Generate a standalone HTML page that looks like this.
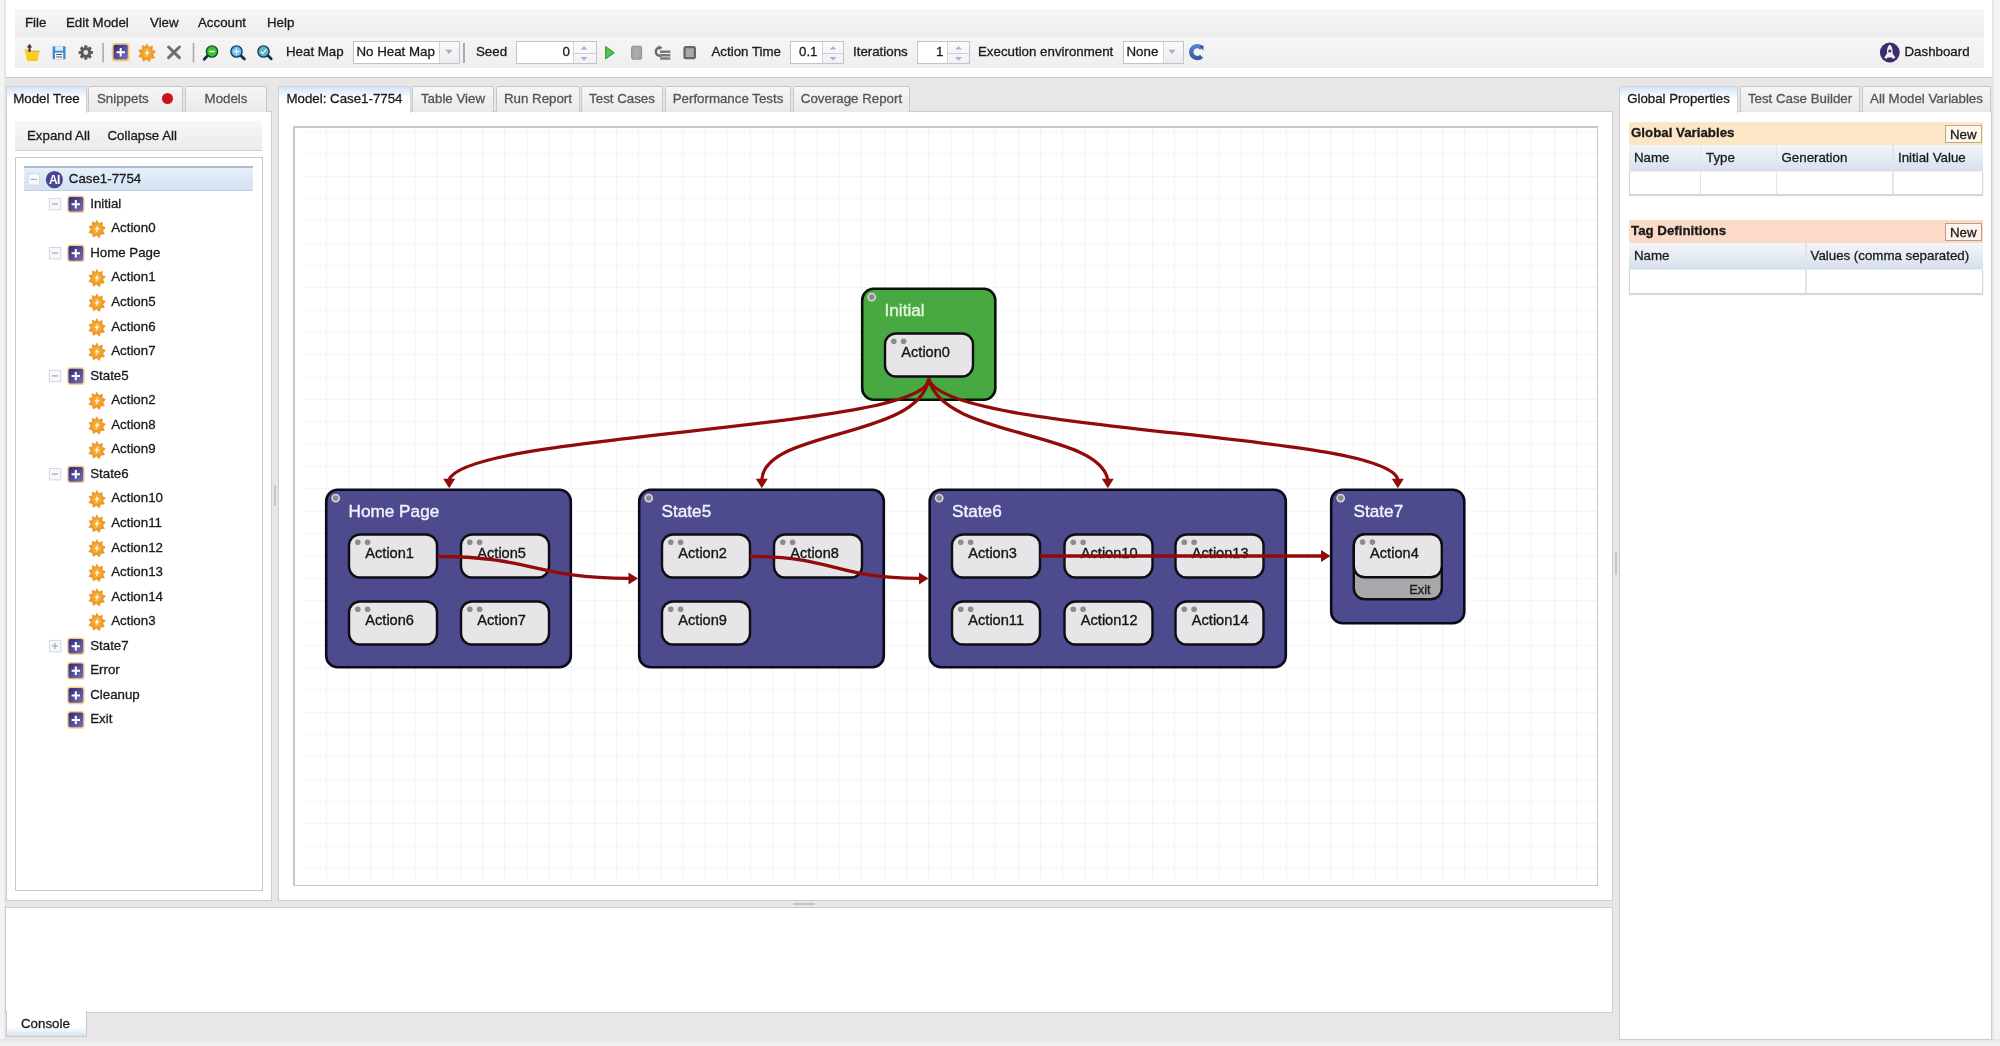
<!DOCTYPE html>
<html><head><meta charset="utf-8">
<style>
*{box-sizing:border-box}
html,body{margin:0;padding:0}
body{width:2000px;height:1046px;overflow:hidden;background:#e8e6e7;font-family:"Liberation Sans",sans-serif;font-size:13.3px;color:#1a1a1a;position:relative;-webkit-text-stroke:0.3px currentColor}
.a{position:absolute}
.t{position:absolute;white-space:nowrap;line-height:1}
.panel{position:absolute;background:#fff;border:1px solid #cdccd0}
.tab{position:absolute;top:86px;height:26px;border:1px solid #c6c6ca;border-bottom:none;background:linear-gradient(#f6f6f8,#e9e9ec);color:#555;text-align:center;line-height:23.2px;border-radius:2px 2px 0 0}
.tab.on{background:linear-gradient(#d6e4f5,#ffffff 45%);color:#1a1a1a;height:27px;border-color:#c9d3df}
.tb{position:absolute;height:24px;top:41px;border:1px solid #c3c3c8;background:#fff}
.tb .sp{position:absolute;top:0;bottom:0;border-left:1px solid #d3d3d8;background:linear-gradient(#fafafa,#ececef)}
.sep{position:absolute;top:44px;width:2px;height:18px;background:#b9b9bd}
</style></head>
<body>
<div id="wrap" style="position:absolute;left:0;top:0;width:2000px;height:1046px;will-change:transform">
<!-- left outer strip -->
<div class="a" style="left:0;top:0;width:6px;height:1046px;background:linear-gradient(90deg,#f3f3f5 60%,#dcdcdf)"></div>
<div class="a" style="left:1992px;top:0;width:8px;height:1046px;background:linear-gradient(90deg,#e2e2e5,#f3f3f5 40%)"></div>
<!-- top panel -->
<div class="a" style="left:6px;top:0;width:1986px;height:78px;background:#fff;border-bottom:1.5px solid #c8c8cc"></div>
<div class="a" style="left:15px;top:9px;width:1969px;height:28px;background:linear-gradient(#f6f6f6,#ececec)"></div>
<div class="a" style="left:15px;top:37px;width:1969px;height:31px;background:linear-gradient(#f5f5f5,#efefef)"></div>
<div class="t" style="left:25px;top:15.6px">File</div>
<div class="t" style="left:66px;top:15.6px">Edit Model</div>
<div class="t" style="left:150px;top:15.6px">View</div>
<div class="t" style="left:198px;top:15.6px">Account</div>
<div class="t" style="left:267px;top:15.6px">Help</div>

<!-- TOOLBAR -->
<svg class="a" style="left:0;top:36px" width="300" height="32">
<defs>
<linearGradient id="pg2" x1="0" y1="0" x2="1" y2="1"><stop offset="0" stop-color="#2f2a78"/><stop offset="1" stop-color="#7a72ba"/></linearGradient>
<linearGradient id="fold" x1="0" y1="0" x2="0" y2="1"><stop offset="0" stop-color="#f3d24a"/><stop offset="1" stop-color="#ffc800"/></linearGradient>
</defs>
<!-- folder -->
<path d="M24.8,14.5 L39.8,14.5 L37.5,25 L27,25 Z" fill="url(#fold)"/>
<path d="M24.5,14 L31,14 L32,15.5 L39.5,15.5" fill="none" stroke="#e0b830" stroke-width="1"/>
<path d="M29.5,16 V9.8" stroke="#5a2a48" stroke-width="2"/>
<path d="M26.8,11.5 L29.5,7.8 L32.2,11.5 Z" fill="#5a2a48"/>
<!-- save -->
<rect x="52.6" y="10.2" width="13" height="13" rx="1" fill="#3f8fd0"/>
<rect x="55.2" y="10.2" width="7.8" height="4.5" fill="#d8ecfa"/>
<rect x="55" y="16.6" width="8.2" height="6.6" fill="#f4f6f8"/>
<path d="M56.2,18.5 H62 M56.2,21 H62" stroke="#555" stroke-width="1.1"/>
<!-- gear -->
<g transform="translate(85.8,16.5)">
<circle r="5.3" fill="#5b5b5b"/>
<g fill="#5b5b5b"><rect x="-1.6" y="-7.2" width="3.2" height="14.4" rx="0.8"/><rect x="-1.6" y="-7.2" width="3.2" height="14.4" rx="0.8" transform="rotate(45)"/><rect x="-1.6" y="-7.2" width="3.2" height="14.4" rx="0.8" transform="rotate(90)"/><rect x="-1.6" y="-7.2" width="3.2" height="14.4" rx="0.8" transform="rotate(135)"/></g>
<circle r="2.4" fill="#e8e8e8"/>
</g>
<rect x="102.3" y="7" width="1.6" height="19.5" fill="#ababab"/>
<!-- plus box -->
<rect x="111.8" y="7" width="17.8" height="18.5" rx="3" fill="#f6c878"/>
<rect x="113.6" y="8.8" width="14.2" height="14.8" rx="2" fill="url(#pg2)"/>
<path d="M120.7,12 V20.5 M116.5,16.2 H125" stroke="#fff" stroke-width="2"/>
<!-- burst -->
<g transform="translate(146.8,16.8) scale(1.02)">
<path d="M0,-8.6 L1.9,-5.3 L5.6,-6.6 L5.1,-2.8 L8.6,-1.3 L6,1.6 L7.6,5 L3.8,5.2 L2.6,8.8 L-0.3,6.3 L-3.6,8.2 L-4.2,4.6 L-8,3.6 L-5.8,0.6 L-7.8,-2.6 L-4.2,-3.2 L-4.6,-7.2 L-1.4,-5.6 Z" fill="#f29a22" stroke="#e08a18" stroke-width="0.6"/><circle r="4.8" fill="#f4a838"/><path d="M1.6,-4.4 L-2.4,0.8 L-0.2,0.8 L-1.4,4.6 L2.8,-0.8 L0.4,-0.8 Z" fill="#fff6e0"/>
</g>
<!-- X -->
<path d="M168.6,11 L179.4,21.6 M179.4,11 L168.6,21.6" stroke="#6e6e6e" stroke-width="3" stroke-linecap="round"/>
<rect x="192.7" y="7" width="1.6" height="19.5" fill="#ababab"/>
<!-- zoom out green -->
<path d="M207.5,19.8 L204.2,23.2" stroke="#0e3050" stroke-width="2.8" stroke-linecap="round"/>
<circle cx="212" cy="15.5" r="5.6" fill="#3cc22c" stroke="#0e4a3a" stroke-width="1.4"/>
<path d="M209.2,15.5 H214.8" stroke="#e8ffe0" stroke-width="1.5"/>
<!-- zoom in blue -->
<path d="M241,19.8 L244.4,23" stroke="#0e3050" stroke-width="2.8" stroke-linecap="round"/>
<circle cx="236.5" cy="15.5" r="5.6" fill="#6cbcea" stroke="#103c60" stroke-width="1.4"/>
<path d="M236.5,12.6 V18.4 M233.7,15.5 H239.3" stroke="#e8f6ff" stroke-width="1.3"/>
<!-- zoom fit teal -->
<path d="M268,19.8 L271.2,22.8" stroke="#0e3050" stroke-width="2.8" stroke-linecap="round"/>
<circle cx="263.5" cy="15.5" r="5.6" fill="#5fb2c2" stroke="#0f3c52" stroke-width="1.4"/>
<path d="M260.8,15.6 L262.8,17.6 L266.3,13.4" fill="none" stroke="#dff8ff" stroke-width="1.3"/>
</svg>
<div class="t" style="left:286px;top:45.1px">Heat Map</div>
<div class="tb" style="left:353px;width:107px;height:22.5px;top:41.3px"><div class="sp" style="left:84.5px;width:20.5px"></div></div>
<div class="t" style="left:356.5px;top:45.1px">No Heat Map</div>
<svg class="a" style="left:445px;top:49px" width="9" height="6"><path d="M0.5,0.8 H7.5 L4,5 Z" fill="#a3aacb"/></svg>
<div class="a" style="left:463px;top:43px;width:1.6px;height:19.5px;background:#ababab"></div>
<div class="t" style="left:476px;top:45.1px">Seed</div>
<div class="tb" style="left:515.5px;width:81px;height:22.5px;top:41.3px"><div class="sp" style="left:56.5px;width:22.5px;background:linear-gradient(#fbfbfd,#f1f1f5)"></div><div class="a" style="left:57px;width:22px;top:10.5px;height:1px;background:#cfcfd4"></div></div>
<div class="t" style="left:562.5px;top:45.1px">0</div>
<div class="t" style="left:711.5px;top:45.1px">Action Time</div>
<div class="tb" style="left:790px;width:54px;height:22.5px;top:41.3px"><div class="sp" style="left:30.5px;width:21.5px;background:linear-gradient(#fbfbfd,#f1f1f5)"></div><div class="a" style="left:31px;width:21px;top:10.5px;height:1px;background:#cfcfd4"></div></div>
<div class="t" style="left:799px;top:45.1px">0.1</div>
<div class="t" style="left:853px;top:45.1px">Iterations</div>
<div class="tb" style="left:917px;width:53px;height:22.5px;top:41.3px"><div class="sp" style="left:28.5px;width:22.5px;background:linear-gradient(#fbfbfd,#f1f1f5)"></div><div class="a" style="left:29px;width:22px;top:10.5px;height:1px;background:#cfcfd4"></div></div>
<div class="t" style="left:936px;top:45.1px">1</div>
<svg class="a" style="left:500px;top:36px" width="500" height="32">
<g fill="#a9aed8"><path d="M80.5,13.6 L84,10.2 L87.5,13.6 Z"/><path d="M80.5,21 L84,24.4 L87.5,21 Z"/>
<path d="M329.5,13.6 L333,10.2 L336.5,13.6 Z"/><path d="M329.5,21 L333,24.4 L336.5,21 Z"/>
<path d="M455,13.6 L458.5,10.2 L462,13.6 Z"/><path d="M455,21 L458.5,24.4 L462,21 Z"/></g>
<!-- play -->
<path d="M105.6,10.8 L114,16.8 L105.6,22.8 Z" fill="#56c452" stroke="#3a9e3a" stroke-width="1.1" stroke-linejoin="round"/>
<!-- pause -->
<rect x="131.6" y="10.2" width="10" height="13" rx="1.5" fill="#a6a6a6" stroke="#8f8f8f" stroke-width="1"/>
<path d="M136.6,10.5 V23" stroke="#b8b8b8" stroke-width="0.8"/>
<!-- step -->
<path d="M160.5,11.4 A4.2,4.2 0 1 0 161.5,19.5" fill="none" stroke="#6a6a6a" stroke-width="2.4"/>
<path d="M158.5,9.2 L162.5,11.8 L158.8,14 Z" fill="#6a6a6a"/>
<rect x="160" y="14.5" width="10.4" height="2.5" fill="#7a7a7a"/><rect x="160" y="18" width="10.4" height="2.5" fill="#7a7a7a"/><rect x="160" y="21.3" width="10.4" height="2.4" fill="#7a7a7a"/>
<!-- stop -->
<rect x="184.5" y="11.2" width="10.4" height="11" rx="1.5" fill="#a9a9a9" stroke="#666" stroke-width="2.2"/>
</svg>
<div class="t" style="left:978px;top:45.1px">Execution environment</div>
<div class="tb" style="left:1123px;width:61px;height:22.5px;top:41.3px"><div class="sp" style="left:38.5px;width:20.5px"></div></div>
<div class="t" style="left:1126.5px;top:45.1px">None</div>
<svg class="a" style="left:1168px;top:49px" width="9" height="6"><path d="M0.5,0.8 H7.5 L4,5 Z" fill="#a3aacb"/></svg>
<svg class="a" style="left:1186px;top:42px" width="22" height="22">
<defs><linearGradient id="rf" x1="0" y1="0" x2="0" y2="1"><stop offset="0" stop-color="#4f86cc"/><stop offset="1" stop-color="#3a5aa8"/></linearGradient></defs>
<path d="M15.8,6.2 A6,6 0 1 0 15.6,14.2" fill="none" stroke="url(#rf)" stroke-width="4.4"/>
<path d="M13,3.2 L17.6,3.8 L17.4,8.8 Z" fill="#3a5a9a"/>
</svg>
<svg class="a" style="left:1878px;top:41px" width="24" height="24">
<circle cx="11.8" cy="11.5" r="9.9" fill="#3b2a6c"/>
<path d="M11.8,3.6 C14.2,5.4 14.8,8.5 14.6,12.6 L17.4,16.4 L15.2,18 L14,16.4 H9.6 L8.4,18 L6.2,16.4 L9,12.6 C8.8,8.5 9.4,5.4 11.8,3.6 Z" fill="#f4eefa"/>
<circle cx="11.8" cy="10" r="1.6" fill="#3b2a6c"/>
</svg>
<div class="t" style="left:1904.5px;top:45.1px">Dashboard</div>


<!-- LEFT PANEL -->
<div class="panel" style="left:6px;top:111px;width:266px;height:790px"></div>
<div class="tab on" style="left:6px;width:81px">Model Tree</div>
<div class="tab" style="left:88px;width:95px;text-align:left;padding-left:8px">Snippets</div>
<div class="a" style="left:161.5px;top:92.6px;width:11.6px;height:11.6px;border-radius:50%;background:#cc1317"></div>
<div class="tab" style="left:185px;width:82px">Models</div>
<div class="a" style="left:15px;top:121px;width:247px;height:30px;background:linear-gradient(#f7f7f7,#ebebeb);border-bottom:1px solid #cfcfd2"></div>
<div class="t" style="left:27px;top:129.4px">Expand All</div>
<div class="t" style="left:107.5px;top:129.4px">Collapse All</div>
<div class="a" style="left:15px;top:157px;width:248px;height:734px;background:#fff;border:1px solid #c9c9cd"></div>
<div class="a" style="left:24px;top:166px;width:229px;height:25px;background:linear-gradient(#e6effa,#d3e1f3);border-top:2px solid #aebdcc;border-bottom:1px solid #c2d0de"></div>
<svg class="a" style="left:0;top:0" width="280" height="760">
<defs><linearGradient id="pg" x1="0" y1="0" x2="1" y2="1"><stop offset="0" stop-color="#2f2a78"/><stop offset="1" stop-color="#7770b8"/></linearGradient>


</defs>
<circle cx="54.4" cy="179.6" r="8.6" fill="#4a4590"/>
<text x="54.4" y="183.9" text-anchor="middle" font-family="Liberation Sans" font-weight="bold" font-size="12" fill="#fff" letter-spacing="-0.6">AI</text>
<rect x="28.2" y="173.8" width="11.4" height="11.4" fill="#f6f8fb" stroke="#d2d8e0" stroke-width="1"/>
<path d="M30.8,179.4 H36.8" stroke="#a4aab2" stroke-width="1.2"/>
<g transform="translate(75.8,204.2)"><rect x="-8.6" y="-8.8" width="17.4" height="17.6" rx="3.2" fill="#f8d08a"/><rect x="-7.3" y="-7.3" width="14.7" height="14.7" rx="2" fill="url(#pg)"/><path d="M0,-4.2 V4.2 M-4.2,0 H4.2" stroke="#fff" stroke-width="2"/></g>
<rect x="49.4" y="198.4" width="11.4" height="11.4" fill="#f6f8fb" stroke="#d2d8e0" stroke-width="1"/>
<path d="M52.0,204.0 H58.0" stroke="#a4aab2" stroke-width="1.2"/>
<g transform="translate(96.8,228.9)"><path d="M0,-8.6 L1.9,-5.3 L5.6,-6.6 L5.1,-2.8 L8.6,-1.3 L6,1.6 L7.6,5 L3.8,5.2 L2.6,8.8 L-0.3,6.3 L-3.6,8.2 L-4.2,4.6 L-8,3.6 L-5.8,0.6 L-7.8,-2.6 L-4.2,-3.2 L-4.6,-7.2 L-1.4,-5.6 Z" fill="#f29a22" stroke="#e08a18" stroke-width="0.6"/><circle r="4.8" fill="#f4a838"/><path d="M1.6,-4.4 L-2.4,0.8 L-0.2,0.8 L-1.4,4.6 L2.8,-0.8 L0.4,-0.8 Z" fill="#fff6e0"/></g>
<g transform="translate(75.8,253.3)"><rect x="-8.6" y="-8.8" width="17.4" height="17.6" rx="3.2" fill="#f8d08a"/><rect x="-7.3" y="-7.3" width="14.7" height="14.7" rx="2" fill="url(#pg)"/><path d="M0,-4.2 V4.2 M-4.2,0 H4.2" stroke="#fff" stroke-width="2"/></g>
<rect x="49.4" y="247.5" width="11.4" height="11.4" fill="#f6f8fb" stroke="#d2d8e0" stroke-width="1"/>
<path d="M52.0,253.1 H58.0" stroke="#a4aab2" stroke-width="1.2"/>
<g transform="translate(96.8,278.0)"><path d="M0,-8.6 L1.9,-5.3 L5.6,-6.6 L5.1,-2.8 L8.6,-1.3 L6,1.6 L7.6,5 L3.8,5.2 L2.6,8.8 L-0.3,6.3 L-3.6,8.2 L-4.2,4.6 L-8,3.6 L-5.8,0.6 L-7.8,-2.6 L-4.2,-3.2 L-4.6,-7.2 L-1.4,-5.6 Z" fill="#f29a22" stroke="#e08a18" stroke-width="0.6"/><circle r="4.8" fill="#f4a838"/><path d="M1.6,-4.4 L-2.4,0.8 L-0.2,0.8 L-1.4,4.6 L2.8,-0.8 L0.4,-0.8 Z" fill="#fff6e0"/></g>
<g transform="translate(96.8,302.6)"><path d="M0,-8.6 L1.9,-5.3 L5.6,-6.6 L5.1,-2.8 L8.6,-1.3 L6,1.6 L7.6,5 L3.8,5.2 L2.6,8.8 L-0.3,6.3 L-3.6,8.2 L-4.2,4.6 L-8,3.6 L-5.8,0.6 L-7.8,-2.6 L-4.2,-3.2 L-4.6,-7.2 L-1.4,-5.6 Z" fill="#f29a22" stroke="#e08a18" stroke-width="0.6"/><circle r="4.8" fill="#f4a838"/><path d="M1.6,-4.4 L-2.4,0.8 L-0.2,0.8 L-1.4,4.6 L2.8,-0.8 L0.4,-0.8 Z" fill="#fff6e0"/></g>
<g transform="translate(96.8,327.2)"><path d="M0,-8.6 L1.9,-5.3 L5.6,-6.6 L5.1,-2.8 L8.6,-1.3 L6,1.6 L7.6,5 L3.8,5.2 L2.6,8.8 L-0.3,6.3 L-3.6,8.2 L-4.2,4.6 L-8,3.6 L-5.8,0.6 L-7.8,-2.6 L-4.2,-3.2 L-4.6,-7.2 L-1.4,-5.6 Z" fill="#f29a22" stroke="#e08a18" stroke-width="0.6"/><circle r="4.8" fill="#f4a838"/><path d="M1.6,-4.4 L-2.4,0.8 L-0.2,0.8 L-1.4,4.6 L2.8,-0.8 L0.4,-0.8 Z" fill="#fff6e0"/></g>
<g transform="translate(96.8,351.7)"><path d="M0,-8.6 L1.9,-5.3 L5.6,-6.6 L5.1,-2.8 L8.6,-1.3 L6,1.6 L7.6,5 L3.8,5.2 L2.6,8.8 L-0.3,6.3 L-3.6,8.2 L-4.2,4.6 L-8,3.6 L-5.8,0.6 L-7.8,-2.6 L-4.2,-3.2 L-4.6,-7.2 L-1.4,-5.6 Z" fill="#f29a22" stroke="#e08a18" stroke-width="0.6"/><circle r="4.8" fill="#f4a838"/><path d="M1.6,-4.4 L-2.4,0.8 L-0.2,0.8 L-1.4,4.6 L2.8,-0.8 L0.4,-0.8 Z" fill="#fff6e0"/></g>
<g transform="translate(75.8,376.1)"><rect x="-8.6" y="-8.8" width="17.4" height="17.6" rx="3.2" fill="#f8d08a"/><rect x="-7.3" y="-7.3" width="14.7" height="14.7" rx="2" fill="url(#pg)"/><path d="M0,-4.2 V4.2 M-4.2,0 H4.2" stroke="#fff" stroke-width="2"/></g>
<rect x="49.4" y="370.3" width="11.4" height="11.4" fill="#f6f8fb" stroke="#d2d8e0" stroke-width="1"/>
<path d="M52.0,375.9 H58.0" stroke="#a4aab2" stroke-width="1.2"/>
<g transform="translate(96.8,400.8)"><path d="M0,-8.6 L1.9,-5.3 L5.6,-6.6 L5.1,-2.8 L8.6,-1.3 L6,1.6 L7.6,5 L3.8,5.2 L2.6,8.8 L-0.3,6.3 L-3.6,8.2 L-4.2,4.6 L-8,3.6 L-5.8,0.6 L-7.8,-2.6 L-4.2,-3.2 L-4.6,-7.2 L-1.4,-5.6 Z" fill="#f29a22" stroke="#e08a18" stroke-width="0.6"/><circle r="4.8" fill="#f4a838"/><path d="M1.6,-4.4 L-2.4,0.8 L-0.2,0.8 L-1.4,4.6 L2.8,-0.8 L0.4,-0.8 Z" fill="#fff6e0"/></g>
<g transform="translate(96.8,425.4)"><path d="M0,-8.6 L1.9,-5.3 L5.6,-6.6 L5.1,-2.8 L8.6,-1.3 L6,1.6 L7.6,5 L3.8,5.2 L2.6,8.8 L-0.3,6.3 L-3.6,8.2 L-4.2,4.6 L-8,3.6 L-5.8,0.6 L-7.8,-2.6 L-4.2,-3.2 L-4.6,-7.2 L-1.4,-5.6 Z" fill="#f29a22" stroke="#e08a18" stroke-width="0.6"/><circle r="4.8" fill="#f4a838"/><path d="M1.6,-4.4 L-2.4,0.8 L-0.2,0.8 L-1.4,4.6 L2.8,-0.8 L0.4,-0.8 Z" fill="#fff6e0"/></g>
<g transform="translate(96.8,450.0)"><path d="M0,-8.6 L1.9,-5.3 L5.6,-6.6 L5.1,-2.8 L8.6,-1.3 L6,1.6 L7.6,5 L3.8,5.2 L2.6,8.8 L-0.3,6.3 L-3.6,8.2 L-4.2,4.6 L-8,3.6 L-5.8,0.6 L-7.8,-2.6 L-4.2,-3.2 L-4.6,-7.2 L-1.4,-5.6 Z" fill="#f29a22" stroke="#e08a18" stroke-width="0.6"/><circle r="4.8" fill="#f4a838"/><path d="M1.6,-4.4 L-2.4,0.8 L-0.2,0.8 L-1.4,4.6 L2.8,-0.8 L0.4,-0.8 Z" fill="#fff6e0"/></g>
<g transform="translate(75.8,474.3)"><rect x="-8.6" y="-8.8" width="17.4" height="17.6" rx="3.2" fill="#f8d08a"/><rect x="-7.3" y="-7.3" width="14.7" height="14.7" rx="2" fill="url(#pg)"/><path d="M0,-4.2 V4.2 M-4.2,0 H4.2" stroke="#fff" stroke-width="2"/></g>
<rect x="49.4" y="468.5" width="11.4" height="11.4" fill="#f6f8fb" stroke="#d2d8e0" stroke-width="1"/>
<path d="M52.0,474.1 H58.0" stroke="#a4aab2" stroke-width="1.2"/>
<g transform="translate(96.8,499.1)"><path d="M0,-8.6 L1.9,-5.3 L5.6,-6.6 L5.1,-2.8 L8.6,-1.3 L6,1.6 L7.6,5 L3.8,5.2 L2.6,8.8 L-0.3,6.3 L-3.6,8.2 L-4.2,4.6 L-8,3.6 L-5.8,0.6 L-7.8,-2.6 L-4.2,-3.2 L-4.6,-7.2 L-1.4,-5.6 Z" fill="#f29a22" stroke="#e08a18" stroke-width="0.6"/><circle r="4.8" fill="#f4a838"/><path d="M1.6,-4.4 L-2.4,0.8 L-0.2,0.8 L-1.4,4.6 L2.8,-0.8 L0.4,-0.8 Z" fill="#fff6e0"/></g>
<g transform="translate(96.8,523.6)"><path d="M0,-8.6 L1.9,-5.3 L5.6,-6.6 L5.1,-2.8 L8.6,-1.3 L6,1.6 L7.6,5 L3.8,5.2 L2.6,8.8 L-0.3,6.3 L-3.6,8.2 L-4.2,4.6 L-8,3.6 L-5.8,0.6 L-7.8,-2.6 L-4.2,-3.2 L-4.6,-7.2 L-1.4,-5.6 Z" fill="#f29a22" stroke="#e08a18" stroke-width="0.6"/><circle r="4.8" fill="#f4a838"/><path d="M1.6,-4.4 L-2.4,0.8 L-0.2,0.8 L-1.4,4.6 L2.8,-0.8 L0.4,-0.8 Z" fill="#fff6e0"/></g>
<g transform="translate(96.8,548.2)"><path d="M0,-8.6 L1.9,-5.3 L5.6,-6.6 L5.1,-2.8 L8.6,-1.3 L6,1.6 L7.6,5 L3.8,5.2 L2.6,8.8 L-0.3,6.3 L-3.6,8.2 L-4.2,4.6 L-8,3.6 L-5.8,0.6 L-7.8,-2.6 L-4.2,-3.2 L-4.6,-7.2 L-1.4,-5.6 Z" fill="#f29a22" stroke="#e08a18" stroke-width="0.6"/><circle r="4.8" fill="#f4a838"/><path d="M1.6,-4.4 L-2.4,0.8 L-0.2,0.8 L-1.4,4.6 L2.8,-0.8 L0.4,-0.8 Z" fill="#fff6e0"/></g>
<g transform="translate(96.8,572.8)"><path d="M0,-8.6 L1.9,-5.3 L5.6,-6.6 L5.1,-2.8 L8.6,-1.3 L6,1.6 L7.6,5 L3.8,5.2 L2.6,8.8 L-0.3,6.3 L-3.6,8.2 L-4.2,4.6 L-8,3.6 L-5.8,0.6 L-7.8,-2.6 L-4.2,-3.2 L-4.6,-7.2 L-1.4,-5.6 Z" fill="#f29a22" stroke="#e08a18" stroke-width="0.6"/><circle r="4.8" fill="#f4a838"/><path d="M1.6,-4.4 L-2.4,0.8 L-0.2,0.8 L-1.4,4.6 L2.8,-0.8 L0.4,-0.8 Z" fill="#fff6e0"/></g>
<g transform="translate(96.8,597.3)"><path d="M0,-8.6 L1.9,-5.3 L5.6,-6.6 L5.1,-2.8 L8.6,-1.3 L6,1.6 L7.6,5 L3.8,5.2 L2.6,8.8 L-0.3,6.3 L-3.6,8.2 L-4.2,4.6 L-8,3.6 L-5.8,0.6 L-7.8,-2.6 L-4.2,-3.2 L-4.6,-7.2 L-1.4,-5.6 Z" fill="#f29a22" stroke="#e08a18" stroke-width="0.6"/><circle r="4.8" fill="#f4a838"/><path d="M1.6,-4.4 L-2.4,0.8 L-0.2,0.8 L-1.4,4.6 L2.8,-0.8 L0.4,-0.8 Z" fill="#fff6e0"/></g>
<g transform="translate(96.8,621.9)"><path d="M0,-8.6 L1.9,-5.3 L5.6,-6.6 L5.1,-2.8 L8.6,-1.3 L6,1.6 L7.6,5 L3.8,5.2 L2.6,8.8 L-0.3,6.3 L-3.6,8.2 L-4.2,4.6 L-8,3.6 L-5.8,0.6 L-7.8,-2.6 L-4.2,-3.2 L-4.6,-7.2 L-1.4,-5.6 Z" fill="#f29a22" stroke="#e08a18" stroke-width="0.6"/><circle r="4.8" fill="#f4a838"/><path d="M1.6,-4.4 L-2.4,0.8 L-0.2,0.8 L-1.4,4.6 L2.8,-0.8 L0.4,-0.8 Z" fill="#fff6e0"/></g>
<g transform="translate(75.8,646.2)"><rect x="-8.6" y="-8.8" width="17.4" height="17.6" rx="3.2" fill="#f8d08a"/><rect x="-7.3" y="-7.3" width="14.7" height="14.7" rx="2" fill="url(#pg)"/><path d="M0,-4.2 V4.2 M-4.2,0 H4.2" stroke="#fff" stroke-width="2"/></g>
<rect x="49.4" y="640.4" width="11.4" height="11.4" fill="#f6f8fb" stroke="#d2d8e0" stroke-width="1"/>
<path d="M52.0,646.0 H58.0" stroke="#a4aab2" stroke-width="1.2"/>
<path d="M55.0,643.0 V649.0" stroke="#a4aab2" stroke-width="1.2"/>
<g transform="translate(75.8,670.8)"><rect x="-8.6" y="-8.8" width="17.4" height="17.6" rx="3.2" fill="#f8d08a"/><rect x="-7.3" y="-7.3" width="14.7" height="14.7" rx="2" fill="url(#pg)"/><path d="M0,-4.2 V4.2 M-4.2,0 H4.2" stroke="#fff" stroke-width="2"/></g>
<g transform="translate(75.8,695.4)"><rect x="-8.6" y="-8.8" width="17.4" height="17.6" rx="3.2" fill="#f8d08a"/><rect x="-7.3" y="-7.3" width="14.7" height="14.7" rx="2" fill="url(#pg)"/><path d="M0,-4.2 V4.2 M-4.2,0 H4.2" stroke="#fff" stroke-width="2"/></g>
<g transform="translate(75.8,719.9)"><rect x="-8.6" y="-8.8" width="17.4" height="17.6" rx="3.2" fill="#f8d08a"/><rect x="-7.3" y="-7.3" width="14.7" height="14.7" rx="2" fill="url(#pg)"/><path d="M0,-4.2 V4.2 M-4.2,0 H4.2" stroke="#fff" stroke-width="2"/></g>
</svg>
<div class="t" style="left:68.8px;top:172.1px">Case1-7754</div>
<div class="t" style="left:90.2px;top:196.7px">Initial</div>
<div class="t" style="left:111.2px;top:221.2px">Action0</div>
<div class="t" style="left:90.2px;top:245.8px">Home Page</div>
<div class="t" style="left:111.2px;top:270.3px">Action1</div>
<div class="t" style="left:111.2px;top:294.9px">Action5</div>
<div class="t" style="left:111.2px;top:319.5px">Action6</div>
<div class="t" style="left:111.2px;top:344.0px">Action7</div>
<div class="t" style="left:90.2px;top:368.6px">State5</div>
<div class="t" style="left:111.2px;top:393.1px">Action2</div>
<div class="t" style="left:111.2px;top:417.7px">Action8</div>
<div class="t" style="left:111.2px;top:442.3px">Action9</div>
<div class="t" style="left:90.2px;top:466.8px">State6</div>
<div class="t" style="left:111.2px;top:491.4px">Action10</div>
<div class="t" style="left:111.2px;top:515.9px">Action11</div>
<div class="t" style="left:111.2px;top:540.5px">Action12</div>
<div class="t" style="left:111.2px;top:565.1px">Action13</div>
<div class="t" style="left:111.2px;top:589.6px">Action14</div>
<div class="t" style="left:111.2px;top:614.2px">Action3</div>
<div class="t" style="left:90.2px;top:638.7px">State7</div>
<div class="t" style="left:90.2px;top:663.3px">Error</div>
<div class="t" style="left:90.2px;top:687.9px">Cleanup</div>
<div class="t" style="left:90.2px;top:712.4px">Exit</div>

<!-- CENTER PANEL -->
<div class="panel" style="left:278px;top:111px;width:1335px;height:790px"></div>
<div class="tab on" style="left:278px;width:133px">Model: Case1-7754</div>
<div class="tab" style="left:412px;width:82px">Table View</div>
<div class="tab" style="left:496px;width:84px">Run Report</div>
<div class="tab" style="left:581px;width:82px">Test Cases</div>
<div class="tab" style="left:665px;width:126px">Performance Tests</div>
<div class="tab" style="left:793px;width:117px">Coverage Report</div>
<div class="a" style="left:293px;top:126px;width:1305px;height:760px;border:2px solid #c8c8cc;border-right-width:1px;border-bottom-width:1px;background:#fff"></div>
<svg class="a" style="left:0;top:0" width="2000" height="1046" viewBox="0 0 2000 1046">
<defs><clipPath id="cv"><rect x="295" y="128" width="1302" height="757"/></clipPath></defs>
<g clip-path="url(#cv)" stroke-width="1" shape-rendering="crispEdges">
<line x1="326.0" y1="128" x2="326.0" y2="882" stroke="#f3f3f5"/>
<line x1="348.3" y1="128" x2="348.3" y2="882" stroke="#f3f3f5"/>
<line x1="370.7" y1="128" x2="370.7" y2="882" stroke="#f3f3f5"/>
<line x1="393.0" y1="128" x2="393.0" y2="882" stroke="#f3f3f5"/>
<line x1="415.3" y1="128" x2="415.3" y2="882" stroke="#f3f3f5"/>
<line x1="437.6" y1="128" x2="437.6" y2="882" stroke="#f3f3f5"/>
<line x1="460.0" y1="128" x2="460.0" y2="882" stroke="#f3f3f5"/>
<line x1="482.3" y1="128" x2="482.3" y2="882" stroke="#f3f3f5"/>
<line x1="504.6" y1="128" x2="504.6" y2="882" stroke="#f3f3f5"/>
<line x1="527.0" y1="128" x2="527.0" y2="882" stroke="#f3f3f5"/>
<line x1="549.3" y1="128" x2="549.3" y2="882" stroke="#f3f3f5"/>
<line x1="571.6" y1="128" x2="571.6" y2="882" stroke="#f3f3f5"/>
<line x1="594.0" y1="128" x2="594.0" y2="882" stroke="#f3f3f5"/>
<line x1="616.3" y1="128" x2="616.3" y2="882" stroke="#f3f3f5"/>
<line x1="638.6" y1="128" x2="638.6" y2="882" stroke="#f3f3f5"/>
<line x1="661.0" y1="128" x2="661.0" y2="882" stroke="#f3f3f5"/>
<line x1="683.3" y1="128" x2="683.3" y2="882" stroke="#f3f3f5"/>
<line x1="705.6" y1="128" x2="705.6" y2="882" stroke="#f3f3f5"/>
<line x1="727.9" y1="128" x2="727.9" y2="882" stroke="#f3f3f5"/>
<line x1="750.3" y1="128" x2="750.3" y2="882" stroke="#f3f3f5"/>
<line x1="772.6" y1="128" x2="772.6" y2="882" stroke="#f3f3f5"/>
<line x1="794.9" y1="128" x2="794.9" y2="882" stroke="#f3f3f5"/>
<line x1="817.3" y1="128" x2="817.3" y2="882" stroke="#f3f3f5"/>
<line x1="839.6" y1="128" x2="839.6" y2="882" stroke="#f3f3f5"/>
<line x1="861.9" y1="128" x2="861.9" y2="882" stroke="#f3f3f5"/>
<line x1="884.3" y1="128" x2="884.3" y2="882" stroke="#f3f3f5"/>
<line x1="906.6" y1="128" x2="906.6" y2="882" stroke="#f3f3f5"/>
<line x1="928.9" y1="128" x2="928.9" y2="882" stroke="#f3f3f5"/>
<line x1="951.2" y1="128" x2="951.2" y2="882" stroke="#f3f3f5"/>
<line x1="973.6" y1="128" x2="973.6" y2="882" stroke="#f3f3f5"/>
<line x1="995.9" y1="128" x2="995.9" y2="882" stroke="#f3f3f5"/>
<line x1="1018.2" y1="128" x2="1018.2" y2="882" stroke="#f3f3f5"/>
<line x1="1040.6" y1="128" x2="1040.6" y2="882" stroke="#f3f3f5"/>
<line x1="1062.9" y1="128" x2="1062.9" y2="882" stroke="#f3f3f5"/>
<line x1="1085.2" y1="128" x2="1085.2" y2="882" stroke="#f3f3f5"/>
<line x1="1107.6" y1="128" x2="1107.6" y2="882" stroke="#f3f3f5"/>
<line x1="1129.9" y1="128" x2="1129.9" y2="882" stroke="#f3f3f5"/>
<line x1="1152.2" y1="128" x2="1152.2" y2="882" stroke="#f3f3f5"/>
<line x1="1174.5" y1="128" x2="1174.5" y2="882" stroke="#f3f3f5"/>
<line x1="1196.9" y1="128" x2="1196.9" y2="882" stroke="#f3f3f5"/>
<line x1="1219.2" y1="128" x2="1219.2" y2="882" stroke="#f3f3f5"/>
<line x1="1241.5" y1="128" x2="1241.5" y2="882" stroke="#f3f3f5"/>
<line x1="1263.9" y1="128" x2="1263.9" y2="882" stroke="#f3f3f5"/>
<line x1="1286.2" y1="128" x2="1286.2" y2="882" stroke="#f3f3f5"/>
<line x1="1308.5" y1="128" x2="1308.5" y2="882" stroke="#f3f3f5"/>
<line x1="1330.8" y1="128" x2="1330.8" y2="882" stroke="#f3f3f5"/>
<line x1="1353.2" y1="128" x2="1353.2" y2="882" stroke="#f3f3f5"/>
<line x1="1375.5" y1="128" x2="1375.5" y2="882" stroke="#f3f3f5"/>
<line x1="1397.8" y1="128" x2="1397.8" y2="882" stroke="#f3f3f5"/>
<line x1="1420.2" y1="128" x2="1420.2" y2="882" stroke="#f3f3f5"/>
<line x1="1442.5" y1="128" x2="1442.5" y2="882" stroke="#f3f3f5"/>
<line x1="1464.8" y1="128" x2="1464.8" y2="882" stroke="#f3f3f5"/>
<line x1="1487.2" y1="128" x2="1487.2" y2="882" stroke="#f3f3f5"/>
<line x1="1509.5" y1="128" x2="1509.5" y2="882" stroke="#f3f3f5"/>
<line x1="1531.8" y1="128" x2="1531.8" y2="882" stroke="#f3f3f5"/>
<line x1="1554.1" y1="128" x2="1554.1" y2="882" stroke="#f3f3f5"/>
<line x1="1576.5" y1="128" x2="1576.5" y2="882" stroke="#f3f3f5"/>
<line x1="1598.8" y1="128" x2="1598.8" y2="882" stroke="#f3f3f5"/>
<line x1="303.5" y1="131.5" x2="1597" y2="131.5" stroke="#ededef" stroke-dasharray="2 2"/>
<line x1="303.5" y1="153.8" x2="1597" y2="153.8" stroke="#ededef" stroke-dasharray="2 2"/>
<line x1="303.5" y1="176.2" x2="1597" y2="176.2" stroke="#ededef" stroke-dasharray="2 2"/>
<line x1="303.5" y1="198.5" x2="1597" y2="198.5" stroke="#ededef" stroke-dasharray="2 2"/>
<line x1="303.5" y1="220.8" x2="1597" y2="220.8" stroke="#ededef" stroke-dasharray="2 2"/>
<line x1="303.5" y1="243.1" x2="1597" y2="243.1" stroke="#ededef" stroke-dasharray="2 2"/>
<line x1="303.5" y1="265.5" x2="1597" y2="265.5" stroke="#ededef" stroke-dasharray="2 2"/>
<line x1="303.5" y1="287.8" x2="1597" y2="287.8" stroke="#ededef" stroke-dasharray="2 2"/>
<line x1="303.5" y1="310.1" x2="1597" y2="310.1" stroke="#ededef" stroke-dasharray="2 2"/>
<line x1="303.5" y1="332.5" x2="1597" y2="332.5" stroke="#ededef" stroke-dasharray="2 2"/>
<line x1="303.5" y1="354.8" x2="1597" y2="354.8" stroke="#ededef" stroke-dasharray="2 2"/>
<line x1="303.5" y1="377.1" x2="1597" y2="377.1" stroke="#ededef" stroke-dasharray="2 2"/>
<line x1="303.5" y1="399.5" x2="1597" y2="399.5" stroke="#ededef" stroke-dasharray="2 2"/>
<line x1="303.5" y1="421.8" x2="1597" y2="421.8" stroke="#ededef" stroke-dasharray="2 2"/>
<line x1="303.5" y1="444.1" x2="1597" y2="444.1" stroke="#ededef" stroke-dasharray="2 2"/>
<line x1="303.5" y1="466.4" x2="1597" y2="466.4" stroke="#ededef" stroke-dasharray="2 2"/>
<line x1="303.5" y1="488.8" x2="1597" y2="488.8" stroke="#ededef" stroke-dasharray="2 2"/>
<line x1="303.5" y1="511.1" x2="1597" y2="511.1" stroke="#ededef" stroke-dasharray="2 2"/>
<line x1="303.5" y1="533.4" x2="1597" y2="533.4" stroke="#ededef" stroke-dasharray="2 2"/>
<line x1="303.5" y1="555.8" x2="1597" y2="555.8" stroke="#ededef" stroke-dasharray="2 2"/>
<line x1="303.5" y1="578.1" x2="1597" y2="578.1" stroke="#ededef" stroke-dasharray="2 2"/>
<line x1="303.5" y1="600.4" x2="1597" y2="600.4" stroke="#ededef" stroke-dasharray="2 2"/>
<line x1="303.5" y1="622.8" x2="1597" y2="622.8" stroke="#ededef" stroke-dasharray="2 2"/>
<line x1="303.5" y1="645.1" x2="1597" y2="645.1" stroke="#ededef" stroke-dasharray="2 2"/>
<line x1="303.5" y1="667.4" x2="1597" y2="667.4" stroke="#ededef" stroke-dasharray="2 2"/>
<line x1="303.5" y1="689.8" x2="1597" y2="689.8" stroke="#ededef" stroke-dasharray="2 2"/>
<line x1="303.5" y1="712.1" x2="1597" y2="712.1" stroke="#ededef" stroke-dasharray="2 2"/>
<line x1="303.5" y1="734.4" x2="1597" y2="734.4" stroke="#ededef" stroke-dasharray="2 2"/>
<line x1="303.5" y1="756.7" x2="1597" y2="756.7" stroke="#ededef" stroke-dasharray="2 2"/>
<line x1="303.5" y1="779.1" x2="1597" y2="779.1" stroke="#ededef" stroke-dasharray="2 2"/>
<line x1="303.5" y1="801.4" x2="1597" y2="801.4" stroke="#ededef" stroke-dasharray="2 2"/>
<line x1="303.5" y1="823.7" x2="1597" y2="823.7" stroke="#ededef" stroke-dasharray="2 2"/>
<line x1="303.5" y1="846.1" x2="1597" y2="846.1" stroke="#ededef" stroke-dasharray="2 2"/>
<line x1="303.5" y1="868.4" x2="1597" y2="868.4" stroke="#ededef" stroke-dasharray="2 2"/>
</g>
<rect x="862.2" y="288.7" width="133.1" height="111.1" rx="11.5" ry="11.5" fill="#48a942" stroke="#041404" stroke-width="2.6"/>
<circle cx="871.7" cy="297.1" r="3.6" fill="#8a8a8c" stroke="#d8d8dc" stroke-width="1.6"/>
<text x="884.5" y="316.0" font-family="Liberation Sans" font-size="17.2" fill="#e4f7dc" stroke="#e4f7dc" stroke-width="0.4">Initial</text>
<rect x="885.0" y="333.5" width="88.0" height="43.0" rx="11" ry="11" fill="#e7e5e7" stroke="#0d0d14" stroke-width="2.4"/>
<circle cx="893.8" cy="341.3" r="2.8" fill="#8c8c8e"/>
<circle cx="903.6" cy="341.3" r="2.8" fill="#8c8c8e"/>
<text x="901.3" y="357.0" font-family="Liberation Sans" font-size="14.6" fill="#161616" stroke="#161616" stroke-width="0.35">Action0</text>
<rect x="326.2" y="489.7" width="244.6" height="177.6" rx="11.5" ry="11.5" fill="#4e4a8e" stroke="#0a0a1c" stroke-width="2.6"/>
<circle cx="335.7" cy="498.1" r="3.6" fill="#8a8a8c" stroke="#d8d8dc" stroke-width="1.6"/>
<text x="348.5" y="517.0" font-family="Liberation Sans" font-size="17.2" fill="#f2f0ff" stroke="#f2f0ff" stroke-width="0.4">Home Page</text>
<rect x="349.0" y="534.5" width="88.0" height="43.0" rx="11" ry="11" fill="#e7e5e7" stroke="#0d0d14" stroke-width="2.4"/>
<circle cx="357.8" cy="542.3" r="2.8" fill="#8c8c8e"/>
<circle cx="367.6" cy="542.3" r="2.8" fill="#8c8c8e"/>
<text x="365.3" y="558.0" font-family="Liberation Sans" font-size="14.6" fill="#161616" stroke="#161616" stroke-width="0.35">Action1</text>
<rect x="461.0" y="534.5" width="88.0" height="43.0" rx="11" ry="11" fill="#e7e5e7" stroke="#0d0d14" stroke-width="2.4"/>
<circle cx="469.8" cy="542.3" r="2.8" fill="#8c8c8e"/>
<circle cx="479.6" cy="542.3" r="2.8" fill="#8c8c8e"/>
<text x="477.3" y="558.0" font-family="Liberation Sans" font-size="14.6" fill="#161616" stroke="#161616" stroke-width="0.35">Action5</text>
<rect x="349.0" y="601.5" width="88.0" height="43.0" rx="11" ry="11" fill="#e7e5e7" stroke="#0d0d14" stroke-width="2.4"/>
<circle cx="357.8" cy="609.3" r="2.8" fill="#8c8c8e"/>
<circle cx="367.6" cy="609.3" r="2.8" fill="#8c8c8e"/>
<text x="365.3" y="625.0" font-family="Liberation Sans" font-size="14.6" fill="#161616" stroke="#161616" stroke-width="0.35">Action6</text>
<rect x="461.0" y="601.5" width="88.0" height="43.0" rx="11" ry="11" fill="#e7e5e7" stroke="#0d0d14" stroke-width="2.4"/>
<circle cx="469.8" cy="609.3" r="2.8" fill="#8c8c8e"/>
<circle cx="479.6" cy="609.3" r="2.8" fill="#8c8c8e"/>
<text x="477.3" y="625.0" font-family="Liberation Sans" font-size="14.6" fill="#161616" stroke="#161616" stroke-width="0.35">Action7</text>
<rect x="639.2" y="489.7" width="244.6" height="177.6" rx="11.5" ry="11.5" fill="#4e4a8e" stroke="#0a0a1c" stroke-width="2.6"/>
<circle cx="648.7" cy="498.1" r="3.6" fill="#8a8a8c" stroke="#d8d8dc" stroke-width="1.6"/>
<text x="661.5" y="517.0" font-family="Liberation Sans" font-size="17.2" fill="#f2f0ff" stroke="#f2f0ff" stroke-width="0.4">State5</text>
<rect x="662.0" y="534.5" width="88.0" height="43.0" rx="11" ry="11" fill="#e7e5e7" stroke="#0d0d14" stroke-width="2.4"/>
<circle cx="670.8" cy="542.3" r="2.8" fill="#8c8c8e"/>
<circle cx="680.6" cy="542.3" r="2.8" fill="#8c8c8e"/>
<text x="678.3" y="558.0" font-family="Liberation Sans" font-size="14.6" fill="#161616" stroke="#161616" stroke-width="0.35">Action2</text>
<rect x="774.0" y="534.5" width="88.0" height="43.0" rx="11" ry="11" fill="#e7e5e7" stroke="#0d0d14" stroke-width="2.4"/>
<circle cx="782.8" cy="542.3" r="2.8" fill="#8c8c8e"/>
<circle cx="792.6" cy="542.3" r="2.8" fill="#8c8c8e"/>
<text x="790.3" y="558.0" font-family="Liberation Sans" font-size="14.6" fill="#161616" stroke="#161616" stroke-width="0.35">Action8</text>
<rect x="662.0" y="601.5" width="88.0" height="43.0" rx="11" ry="11" fill="#e7e5e7" stroke="#0d0d14" stroke-width="2.4"/>
<circle cx="670.8" cy="609.3" r="2.8" fill="#8c8c8e"/>
<circle cx="680.6" cy="609.3" r="2.8" fill="#8c8c8e"/>
<text x="678.3" y="625.0" font-family="Liberation Sans" font-size="14.6" fill="#161616" stroke="#161616" stroke-width="0.35">Action9</text>
<rect x="929.7" y="489.7" width="356.1" height="177.6" rx="11.5" ry="11.5" fill="#4e4a8e" stroke="#0a0a1c" stroke-width="2.6"/>
<circle cx="939.2" cy="498.1" r="3.6" fill="#8a8a8c" stroke="#d8d8dc" stroke-width="1.6"/>
<text x="952.0" y="517.0" font-family="Liberation Sans" font-size="17.2" fill="#f2f0ff" stroke="#f2f0ff" stroke-width="0.4">State6</text>
<rect x="952.0" y="534.5" width="88.0" height="43.0" rx="11" ry="11" fill="#e7e5e7" stroke="#0d0d14" stroke-width="2.4"/>
<circle cx="960.8" cy="542.3" r="2.8" fill="#8c8c8e"/>
<circle cx="970.6" cy="542.3" r="2.8" fill="#8c8c8e"/>
<text x="968.3" y="558.0" font-family="Liberation Sans" font-size="14.6" fill="#161616" stroke="#161616" stroke-width="0.35">Action3</text>
<rect x="1064.5" y="534.5" width="88.0" height="43.0" rx="11" ry="11" fill="#e7e5e7" stroke="#0d0d14" stroke-width="2.4"/>
<circle cx="1073.3" cy="542.3" r="2.8" fill="#8c8c8e"/>
<circle cx="1083.1" cy="542.3" r="2.8" fill="#8c8c8e"/>
<text x="1080.8" y="558.0" font-family="Liberation Sans" font-size="14.6" fill="#161616" stroke="#161616" stroke-width="0.35">Action10</text>
<rect x="1175.5" y="534.5" width="88.0" height="43.0" rx="11" ry="11" fill="#e7e5e7" stroke="#0d0d14" stroke-width="2.4"/>
<circle cx="1184.3" cy="542.3" r="2.8" fill="#8c8c8e"/>
<circle cx="1194.1" cy="542.3" r="2.8" fill="#8c8c8e"/>
<text x="1191.8" y="558.0" font-family="Liberation Sans" font-size="14.6" fill="#161616" stroke="#161616" stroke-width="0.35">Action13</text>
<rect x="952.0" y="601.5" width="88.0" height="43.0" rx="11" ry="11" fill="#e7e5e7" stroke="#0d0d14" stroke-width="2.4"/>
<circle cx="960.8" cy="609.3" r="2.8" fill="#8c8c8e"/>
<circle cx="970.6" cy="609.3" r="2.8" fill="#8c8c8e"/>
<text x="968.3" y="625.0" font-family="Liberation Sans" font-size="14.6" fill="#161616" stroke="#161616" stroke-width="0.35">Action11</text>
<rect x="1064.5" y="601.5" width="88.0" height="43.0" rx="11" ry="11" fill="#e7e5e7" stroke="#0d0d14" stroke-width="2.4"/>
<circle cx="1073.3" cy="609.3" r="2.8" fill="#8c8c8e"/>
<circle cx="1083.1" cy="609.3" r="2.8" fill="#8c8c8e"/>
<text x="1080.8" y="625.0" font-family="Liberation Sans" font-size="14.6" fill="#161616" stroke="#161616" stroke-width="0.35">Action12</text>
<rect x="1175.5" y="601.5" width="88.0" height="43.0" rx="11" ry="11" fill="#e7e5e7" stroke="#0d0d14" stroke-width="2.4"/>
<circle cx="1184.3" cy="609.3" r="2.8" fill="#8c8c8e"/>
<circle cx="1194.1" cy="609.3" r="2.8" fill="#8c8c8e"/>
<text x="1191.8" y="625.0" font-family="Liberation Sans" font-size="14.6" fill="#161616" stroke="#161616" stroke-width="0.35">Action14</text>
<rect x="1331.2" y="489.7" width="133.1" height="133.6" rx="11.5" ry="11.5" fill="#4e4a8e" stroke="#0a0a1c" stroke-width="2.6"/>
<circle cx="1340.7" cy="498.1" r="3.6" fill="#8a8a8c" stroke="#d8d8dc" stroke-width="1.6"/>
<text x="1353.5" y="517.0" font-family="Liberation Sans" font-size="17.2" fill="#f2f0ff" stroke="#f2f0ff" stroke-width="0.4">State7</text>
<rect x="1353.8" y="534.3" width="88.0" height="65.0" rx="11" ry="11" fill="#a8a8aa" stroke="#0d0d14" stroke-width="2.4"/>
<text x="1430.6" y="594.3" text-anchor="end" font-family="Liberation Sans" font-size="12.8" fill="#1a1a1a" stroke="#1a1a1a" stroke-width="0.3">Exit</text>
<rect x="1353.8" y="534.3" width="88.0" height="43.0" rx="11" ry="11" fill="#e7e5e7" stroke="#0d0d14" stroke-width="2.4"/>
<circle cx="1362.6" cy="542.0999999999999" r="2.8" fill="#8c8c8e"/>
<circle cx="1372.3999999999999" cy="542.0999999999999" r="2.8" fill="#8c8c8e"/>
<text x="1370.1" y="557.8" font-family="Liberation Sans" font-size="14.6" fill="#161616" stroke="#161616" stroke-width="0.35">Action4</text>
<path d="M928.7,378.7 C928.3,429.8 467.9,432.4 449.2,479.5" fill="none" stroke="#920b0b" stroke-width="3.3"/>
<path d="M449.2,488.2 L443.2,478.7 L455.2,478.7 Z" fill="#920b0b"/>
<path d="M928.7,378.7 C919.8,439.0 765.2,429.1 761.8,479.5" fill="none" stroke="#920b0b" stroke-width="3.3"/>
<path d="M761.8,488.2 L755.8,478.7 L767.8,478.7 Z" fill="#920b0b"/>
<path d="M928.7,378.7 C941.8,438.2 1098.1,429.9 1107.8,479.5" fill="none" stroke="#920b0b" stroke-width="3.3"/>
<path d="M1107.8,488.2 L1101.8,478.7 L1113.8,478.7 Z" fill="#920b0b"/>
<path d="M928.7,378.7 C942.1,433.7 1385.3,431.9 1397.8,479.5" fill="none" stroke="#920b0b" stroke-width="3.3"/>
<path d="M1397.8,488.2 L1391.8,478.7 L1403.8,478.7 Z" fill="#920b0b"/>
<path d="M437.5,556.5 C533.25,556.5 533.25,578.4 629,578.4" fill="none" stroke="#920b0b" stroke-width="3.3"/>
<path d="M638.0,578.4 L628.5,584.4 L628.5,572.4 Z" fill="#920b0b"/>
<path d="M750,556.5 C834.75,556.5 834.75,578.4 919.5,578.4" fill="none" stroke="#920b0b" stroke-width="3.3"/>
<path d="M928.5,578.4 L919.0,584.4 L919.0,572.4 Z" fill="#920b0b"/>
<path d="M1040,556 L1322,556" fill="none" stroke="#920b0b" stroke-width="3.3"/>
<path d="M1330.5,556.0 L1321.0,562.0 L1321.0,550.0 Z" fill="#920b0b"/>
</svg>

<!-- splitter handles -->
<div class="a" style="left:274px;top:484.5px;width:2.2px;height:21px;border-radius:1px;background:#c6c6ca"></div>
<div class="a" style="left:792.5px;top:902.8px;width:22.5px;height:2.2px;border-radius:1px;background:#c6c6ca"></div>
<div class="a" style="left:1615px;top:552px;width:2.2px;height:22.5px;border-radius:1px;background:#c6c6ca"></div>
<!-- CONSOLE -->
<div class="a" style="left:0;top:1039px;width:2000px;height:7px;background:linear-gradient(#e4e4e6,#f1f1f3 60%)"></div>
<div class="panel" style="left:5px;top:907px;width:1608px;height:105.5px"></div>
<div class="a" style="left:5.5px;top:1011px;width:81px;height:25.5px;background:linear-gradient(#ffffff 62%,#d8e4f2);border:1px solid #c9c9cd;border-top:none"></div>
<div class="t" style="left:21px;top:1016.5px">Console</div>

<!-- RIGHT PANEL -->
<div class="panel" style="left:1619px;top:111px;width:373px;height:929px"></div>
<div class="tab on" style="left:1619px;width:119px">Global Properties</div>
<div class="tab" style="left:1740px;width:120px">Test Case Builder</div>
<div class="tab" style="left:1862px;width:129px">All Model Variables</div>
<div class="a" style="left:1629px;top:122px;width:354px;height:22.5px;background:#fde6c6"></div>
<div class="t" style="left:1631px;top:126px;font-weight:bold">Global Variables</div>
<div class="a" style="left:1945px;top:124.5px;width:36.5px;height:18px;background:#fff8ec;border:1px solid #b9a98e;text-align:center;line-height:17px">New</div>
<div class="a" style="left:1629px;top:144.5px;width:354px;height:26px;background:linear-gradient(#f3f6fa,#d6e0ec)"></div>
<div class="a" style="left:1629px;top:170.5px;width:354px;height:24.5px;background:#fff;border:1px solid #d4d4d8;border-top:1px solid #ececec;box-shadow:0 1px 1px #d8d8d8"></div>
<div class="a" style="left:1699.6px;top:145px;width:1.5px;height:50px;background:#e2e4e8"></div>
<div class="a" style="left:1775.8px;top:145px;width:1.5px;height:50px;background:#e2e4e8"></div>
<div class="a" style="left:1892px;top:145px;width:1.5px;height:50px;background:#e2e4e8"></div>
<div class="t" style="left:1634px;top:151.2px">Name</div>
<div class="t" style="left:1706px;top:151.2px">Type</div>
<div class="t" style="left:1781.5px;top:151.2px">Generation</div>
<div class="t" style="left:1898px;top:151.2px">Initial Value</div>

<div class="a" style="left:1629px;top:219.5px;width:354px;height:23px;background:#fcdac8"></div>
<div class="t" style="left:1631px;top:224px;font-weight:bold">Tag Definitions</div>
<div class="a" style="left:1945px;top:222.5px;width:36.5px;height:18px;background:#fff3ec;border:1px solid #b9a08e;text-align:center;line-height:17px">New</div>
<div class="a" style="left:1629px;top:242.5px;width:354px;height:26px;background:linear-gradient(#f3f6fa,#d6e0ec)"></div>
<div class="a" style="left:1629px;top:268.5px;width:354px;height:25px;background:#fff;border:1px solid #d4d4d8;border-top:1px solid #ececec;box-shadow:0 1px 1px #d8d8d8"></div>
<div class="a" style="left:1805px;top:243px;width:1.5px;height:50px;background:#e2e4e8"></div>
<div class="t" style="left:1634px;top:249.2px">Name</div>
<div class="t" style="left:1810.5px;top:249.2px">Values (comma separated)</div>

</div>
</body></html>
